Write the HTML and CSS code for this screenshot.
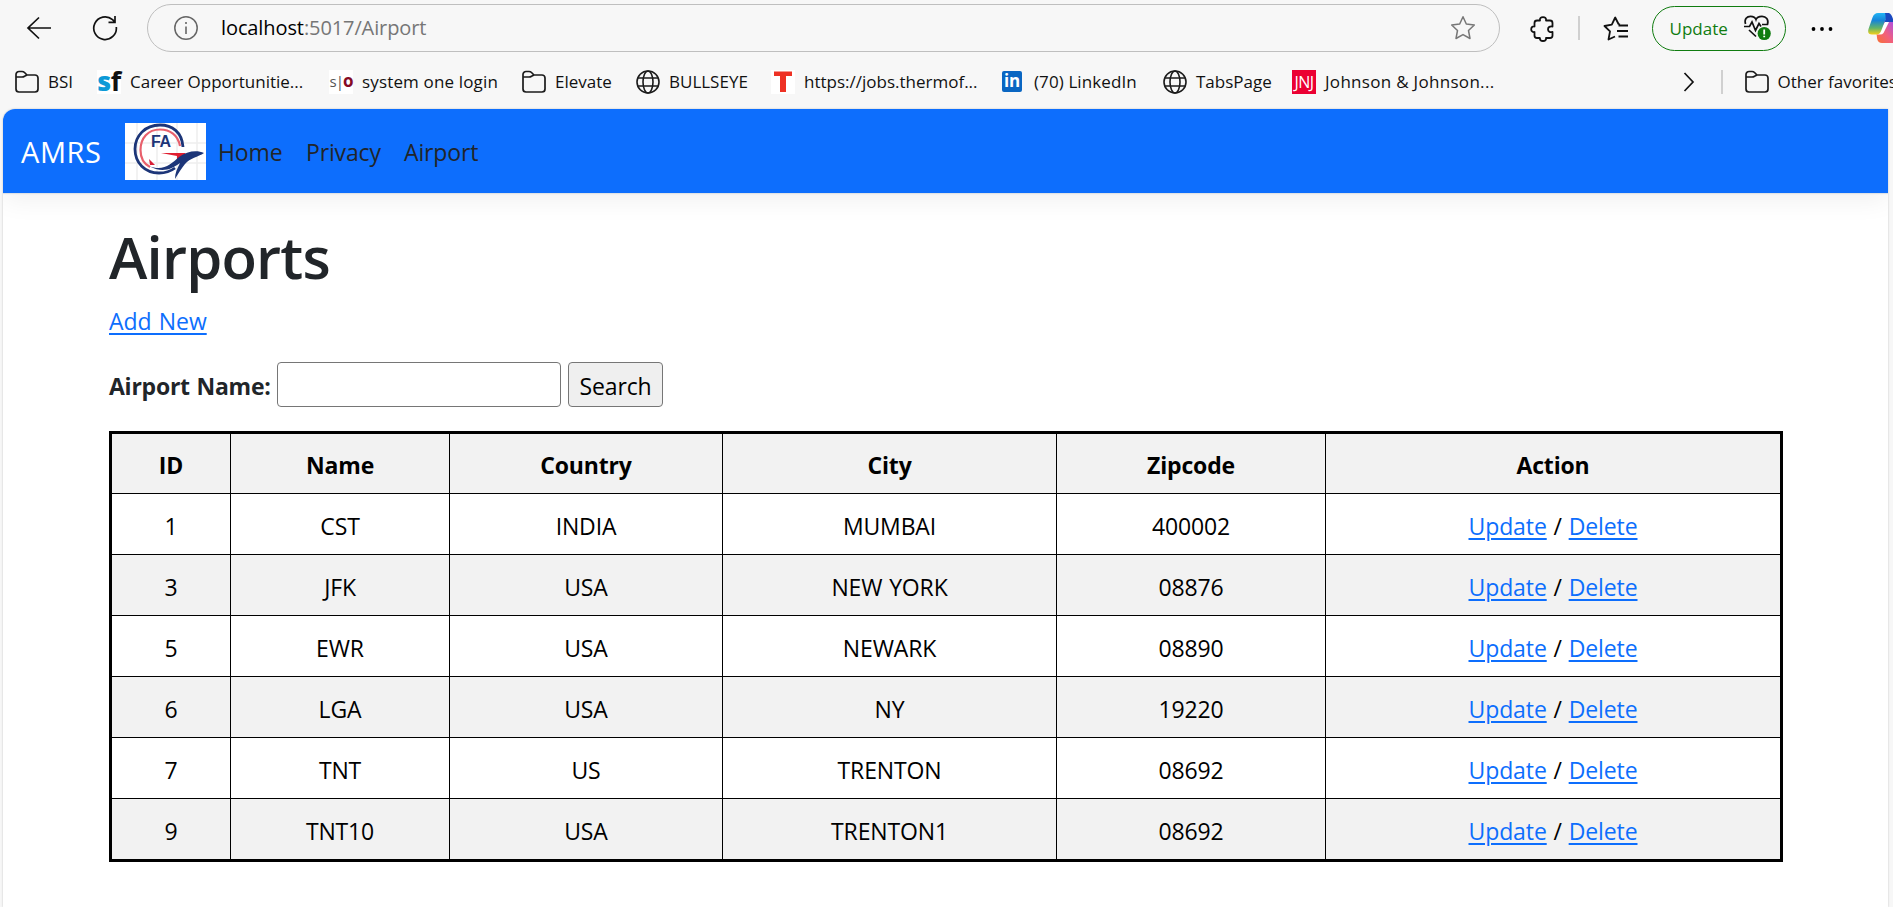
FILE: index.html
```html
<!DOCTYPE html>
<html lang="en">
<head>
<meta charset="utf-8">
<title>Airports - AMRS</title>
<link rel="stylesheet" href="styles.css">
</head>
<body>
<svg class="defs" width="0" height="0">
  <symbol id="folder" viewBox="0 0 24 24"><path d="M1 6V19a3 3 0 0 0 3 3H20a3 3 0 0 0 3-3V8a3 3 0 0 0-3-3H12L9.500 2.500Q8.500 1.500 7 1.500H4a3 3 0 0 0-3 3V7H7Q8.500 7 9.500 6.300L12 5" fill="none" stroke="#1b1b1b" stroke-width="1.700" stroke-linejoin="round"/></symbol>
  <symbol id="globe" viewBox="0 0 24 24"><g fill="none" stroke="#1b1b1b" stroke-width="1.600"><circle cx="12" cy="12" r="11"/><ellipse cx="12" cy="12" rx="5" ry="11"/><path d="M2 8H22M2 16H22"/></g></symbol>
</svg>
<div class="browser">
  <div class="toolbar">
    <svg class="back" width="26" height="24" viewBox="0 0 26 24"><path d="M25 12H2M13 1.500L2 12 13 22.500" fill="none" stroke="#111" stroke-width="1.700"/></svg>
    <svg class="reload" width="26" height="26" viewBox="0 0 26 26"><path d="M24.300 12A11.300 11.300 0 1 1 20.500 4.700L23 7M23 1V7.300H16.500" fill="none" stroke="#111" stroke-width="1.700"/></svg>
    <div class="address">
      <svg width="26" height="26" viewBox="0 0 26 26"><circle cx="13" cy="13" r="11.200" fill="none" stroke="#666" stroke-width="1.500"/><path d="M13 11.500V19M13 7V9" stroke="#666" stroke-width="1.600"/></svg>
      <span class="url"><b>localhost</b>:5017/Airport</span>
      <svg class="star" width="26" height="26" viewBox="0 0 26 26"><path d="M13 1.800L16.300 9 24.300 10 18.500 15.500 20 23.500 13 19.600 6 23.500 7.500 15.500 1.700 10 9.700 9Z" fill="none" stroke="#777" stroke-width="1.500" stroke-linejoin="round"/></svg>
    </div>
    <svg class="puzzle" width="26" height="26" viewBox="0 0 26 26"><path d="M7 4.500H10C9.500 2 11 1.200 13 1.200S16.500 2 16 4.500H20Q22.500 4.500 22.500 7V10.500C20 10 18 11 18 13.300S20 16.500 22.500 16V19.500Q22.500 22 20 22H16C16.500 24 15 25 13 25S9.500 24 10 22H7Q4.500 22 4.500 19.500V16C2.500 16.500 1.200 15 1.200 13.200S2.500 10 4.500 10.500V7Q4.500 4.500 7 4.500Z" fill="none" stroke="#111" stroke-width="1.800" stroke-linejoin="round"/></svg>
    <i class="rule"></i>
    <svg class="favs" width="26" height="26" viewBox="0 0 26 26"><path d="M17 8.500L15.500 8 12.200 1.500 8.800 8.700 1.500 10 7 15.300 5.500 23.500 12 20.500M15.500 9.500H25M14 15H25M15.500 20.500H25" fill="none" stroke="#111" stroke-width="1.800" stroke-linejoin="round"/></svg>
    <div class="update"><span>Update</span>
      <svg width="30" height="28" viewBox="0 0 30 28"><path d="M2.500 10C1 5 4 2.300 7.500 2.300 10.500 2.300 12.500 4 13 5.500 13.500 4 16 2.300 19 2.300 23 2.300 26 5.500 24.500 10.500H19M1 12.500H6.500L9 8 12.500 16.500 16 9.500 18 12.500M6 16L13 22.500" fill="none" stroke="#111" stroke-width="1.700"/><circle cx="21.200" cy="19.500" r="6.600" fill="#107c10"/><path d="M21.200 15.500V20.500M21.200 21.700V23.200" stroke="#fff" stroke-width="1.800"/></svg>
    </div>
    <svg class="dots" width="22" height="6" viewBox="0 0 22 6"><circle cx="2.500" cy="3" r="1.900"/><circle cx="11" cy="3" r="1.900"/><circle cx="19.500" cy="3" r="1.900"/></svg>
    <svg class="copilot" width="25" height="30" viewBox="0 0 25 30">
      <defs><linearGradient id="cp1" x1="0" y1="0" x2="0" y2="1"><stop offset="0" stop-color="#22b4f4"/><stop offset=".35" stop-color="#1684d8"/><stop offset=".7" stop-color="#62b468"/><stop offset="1" stop-color="#f4d018"/></linearGradient><linearGradient id="cp2" x1="1" y1="0" x2="0" y2="1"><stop offset="0" stop-color="#b050e0"/><stop offset=".5" stop-color="#f2607c"/><stop offset="1" stop-color="#f87030"/></linearGradient></defs>
      <path d="M8.500 20L15 8.500H25V30H14Q10 30 9.200 26Z" fill="url(#cp2)"/>
      <path d="M17 9H21L15.500 20Q14.500 21.500 12 21.500H9Z" fill="#fff"/>
      <path d="M10 0H21Q18 4 16.500 9L13.500 17Q12 21.500 8.500 21.500H4Q-1 21.500 .5 16L4.500 4.500Q6 0 10 0Z" fill="url(#cp1)"/><path d="M17 0H21Q23.500 1 25 6V9H16.500Q18.500 5 17 0Z" fill="#1a49c0"/></svg>
  </div>
  <div class="bookmarks">
    <a class="bm b1"><svg><use href="#folder"/></svg><span>BSI</span></a>
    <a class="bm b2"><em class="sf"><b>s</b>f</em><span>Career Opportunitie...</span></a>
    <a class="bm b3"><em class="so">s|<b>o</b></em><span>system one login</span></a>
    <a class="bm b4"><svg><use href="#folder"/></svg><span>Elevate</span></a>
    <a class="bm b5"><svg><use href="#globe"/></svg><span>BULLSEYE</span></a>
    <a class="bm b6"><svg viewBox="0 0 24 24"><path fill="#fff" d="M0 0H24V24H0Z"/><path fill="#ee3124" d="M3 1.500H21V6H15V22H9V6H3Z"/></svg><span>https://jobs.thermof...</span></a>
    <a class="bm b7"><em class="li">in</em><span>(70) LinkedIn</span></a>
    <a class="bm b8"><svg><use href="#globe"/></svg><span>TabsPage</span></a>
    <a class="bm b9"><em class="jnj">JNJ</em><span>Johnson &amp; Johnson...</span></a>
    <svg class="more" viewBox="0 0 12 20"><path d="M1.500 1L10 10 1.500 19" fill="none" stroke="#111" stroke-width="1.700"/></svg>
    <i class="rule"></i>
    <a class="bm b10"><svg><use href="#folder"/></svg><span>Other favorites</span></a>
  </div>
</div>
<div class="page">
  <nav class="navbar">
    <a class="brand">AMRS</a>
    <svg class="logo" width="81" height="57" viewBox="0 0 81 57">
      <path fill="#fff" d="M0 0H81V57H0Z"/><path d="M12 0V57M32 0V57M52 0V57M72 0V57M0 20H81M0 40H81" stroke="#eee" stroke-width="1.500"/>
      <path d="M58 24C57 9 47 2 35 2 20 2 10 13 10 26 10 40 20 50 34 50 41 50 46 48 50 45" fill="none" stroke="#1c3578" stroke-width="2.800"/>
      <path d="M55 23C53 12 45 6.500 35 6.500 23 6.500 15.500 15 15.500 27 15.500 35 19 41 25 44" fill="none" stroke="#e8606c" stroke-width="2.200"/>
      <path d="M24 36L30 42 25 42Z" fill="#d81e35"/><path d="M36 30L61 30 52 38 52 33Z" fill="#e01e30"/>
      <path d="M24 43C38 49 46 41 54 34 62 28 72 27 79 30 73 34 65 35 60 41 56 46 53 51 50 56 50 50 52 46 55 40 46 47 36 50 24 43Z" fill="#1c3578"/>
      <text x="26" y="24" class="logo-text">FA</text>
    </svg>
    <a class="link l1">Home</a><a class="link l2">Privacy</a><a class="link l3">Airport</a>
  </nav>
  <main class="container">
    <h1>Airports</h1>
    <p class="add"><a class="act">Add New</a></p>
    <form class="search"><label>Airport Name:</label><input type="text"><button type="button">Search</button></form>
    <table>
      <colgroup><col class="c1"><col class="c2"><col class="c3"><col class="c4"><col class="c5"><col class="c6"></colgroup>
      <tr><th>ID</th><th>Name</th><th>Country</th><th>City</th><th>Zipcode</th><th>Action</th></tr>
      <tr><td>1</td><td>CST</td><td>INDIA</td><td>MUMBAI</td><td>400002</td><td><a class="act">Update</a> / <a class="act">Delete</a></td></tr>
      <tr><td>3</td><td>JFK</td><td>USA</td><td>NEW YORK</td><td>08876</td><td><a class="act">Update</a> / <a class="act">Delete</a></td></tr>
      <tr><td>5</td><td>EWR</td><td>USA</td><td>NEWARK</td><td>08890</td><td><a class="act">Update</a> / <a class="act">Delete</a></td></tr>
      <tr><td>6</td><td>LGA</td><td>USA</td><td>NY</td><td>19220</td><td><a class="act">Update</a> / <a class="act">Delete</a></td></tr>
      <tr><td>7</td><td>TNT</td><td>US</td><td>TRENTON</td><td>08692</td><td><a class="act">Update</a> / <a class="act">Delete</a></td></tr>
      <tr><td>9</td><td>TNT10</td><td>USA</td><td>TRENTON1</td><td>08692</td><td><a class="act">Update</a> / <a class="act">Delete</a></td></tr>
    </table>
  </main>
</div>
</body>
</html>
```
FILE: styles.css
```css
* { box-sizing: border-box; }
body { margin: 0; height: 907px; overflow: hidden; background: #f7f7f7; color: #212529; font: 23px/36px "Open Sans", "Noto Sans", sans-serif; letter-spacing: -.15px; word-spacing: 1px; display: flex; flex-direction: column; }
svg { display: block; flex: none; }
.defs { position: absolute; }
.browser { height: 109px; flex: none; overflow: hidden; }
.toolbar { height: 56px; display: flex; align-items: center; padding-left: 26px; }
.reload { margin-left: 40px; }
.address { width: 1353px; height: 48px; margin-left: 29px; border: 1.500px solid #bfbfbf; border-radius: 24px; display: flex; align-items: center; padding: 0 23px 0 25px; flex: none; margin-top: -1px; }
.url { font-size: 20px; letter-spacing: -.1px; margin-left: 22px; color: #767676; flex: 1; padding-top: 1px; }
.url b { font-weight: 400; color: #000; }
.puzzle { margin-left: 30px; margin-top: 2px; }
.rule { width: 1.500px; height: 24px; background: #d0d0d0; flex: none; }
.toolbar .rule { margin-left: 22px; }
.favs { margin-left: 23px; margin-top: 2px; }
.update { width: 134px; height: 45px; margin-left: 23px; border: 1.500px solid #107c10; border-radius: 23px; display: flex; align-items: center; flex: none; color: #107c10; padding-left: 17px; font-size: 17px; letter-spacing: 0; }
.update span { width: 73px; padding-top: 1px; }
.dots { margin: 2px 0 0 25px; }
.copilot { margin-left: 35px; }
.bookmarks { height: 51px; display: flex; align-items: center; font-size: 17px; letter-spacing: 0; word-spacing: 0; color: #111; }
.bm { display: flex; align-items: center; gap: 9px; flex: none; white-space: nowrap; }
.bm svg, .bm em { width: 24px; height: 24px; flex: none; }
.bm em { font-style: normal; background: #fff; text-align: center; line-height: 24px; }
.b1 { margin-left: 15px; width: 82px; }
.b2 { width: 232px; }
.b3 { width: 193px; letter-spacing: .15px; }
.b4 { width: 114px; }
.b5 { width: 135px; }
.b6 { width: 229px; }
.b7 { width: 163px; letter-spacing: .1px; }
.b8 { width: 129px; }
.b9 { width: 391px; letter-spacing: .3px; }
.bm .sf { font: 700 27px/22px "Open Sans", sans-serif; letter-spacing: -.5px; }
.sf b { color: #0c9ad7; }
.bm .so { font-size: 15px; letter-spacing: -1px; color: #555; line-height: 22px; }
.so b { color: #850a24; font-size: 17px; }
.bm .li { width: 20px; height: 21px; background: #0a66c2; color: #fff; font-weight: 700; font-size: 17px; line-height: 20px; border-radius: 2px; margin: 0 3px 0 2px; letter-spacing: -.3px; }
.bm .jnj { background: #eb0033; color: #fff; font-size: 16px; letter-spacing: -.5px; }
.more { width: 12px; height: 20px; }
.bookmarks .rule { margin: 0 22px 0 26px; }
.page { flex: 1; margin: 0 5px 0 3px; background: #fff; border-radius: 12px 0 0 0; overflow: hidden; box-shadow: 0 0 2px #bbb; }
.navbar { height: 84px; background: #0d6efd; display: flex; align-items: center; padding-left: 18px; box-shadow: 0 1px 1px #dee2e6, 0 8px 24px rgba(0,0,0,.06); }
.brand { color: #fff; font-size: 29px; width: 104px; letter-spacing: .6px; padding-top: 1px; }
.logo-text { font: 700 16px "Liberation Sans", sans-serif; fill: #1c3578; letter-spacing: -.5px; }
.link { color: #212529; padding-top: 2px; }
.l1 { margin-left: 12px; width: 88px; }
.l2 { width: 98px; }
.container { padding: 28px 0 0 106px; }
h1 { margin: 0 0 10px; font-size: 58px; font-weight: 600; line-height: 72px; letter-spacing: -.8px; }
.add { margin: 0 0 23px; letter-spacing: 0; }
.act { color: #0d6efd; text-decoration: underline; text-decoration-thickness: 2px; text-underline-offset: 3px; }
td .act { letter-spacing: -.1px; }
.search { display: flex; height: 45px; margin-bottom: 24px; }
label { font-weight: 700; width: 168px; letter-spacing: -.25px; padding-top: 6px; white-space: nowrap; }
input { width: 284px; border: 1.500px solid #767676; border-radius: 4px; margin: 0 7px 0 0; }
button { width: 95px; border: 1.500px solid #767676; border-radius: 4px; background: #efefef; font: inherit; letter-spacing: inherit; padding: 3px 0 0; color: #000; }
table { width: 1674px; table-layout: fixed; border-collapse: collapse; border: 3px solid #000; color: #000; }
.c1 { width: 120px; } .c2 { width: 219px; } .c3 { width: 273px; } .c4 { width: 334px; } .c5 { width: 269px; }
th, td { border: 1px solid #000; height: 61px; padding: 3px 0 0; text-align: center; }
th { font-weight: 700; }
tr:last-child td { height: 62px; }
tr:nth-child(odd) { background: #f2f2f2; }
```
